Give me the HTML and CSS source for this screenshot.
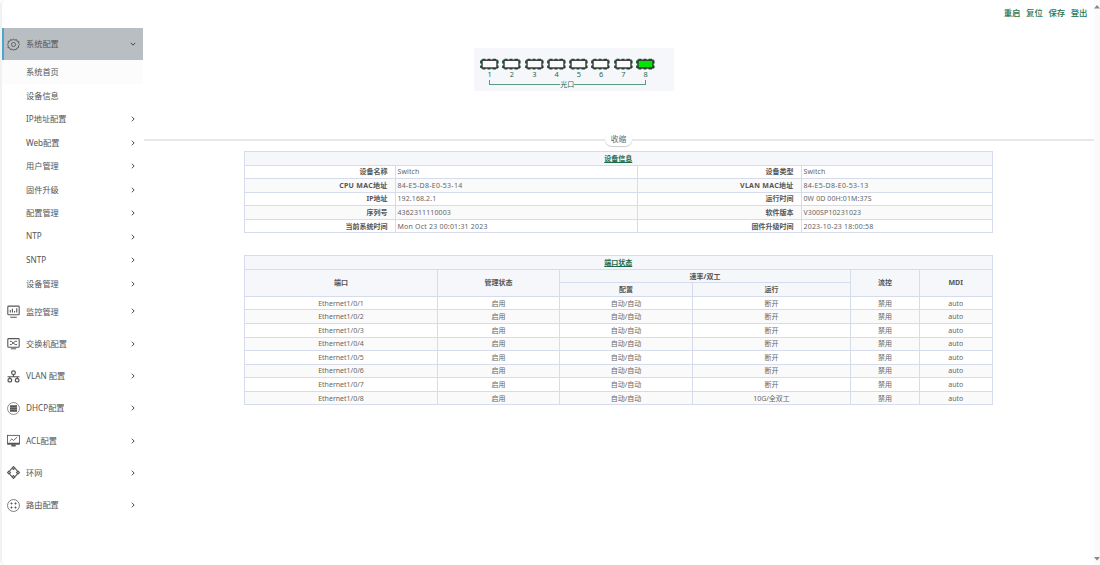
FILE: index.html
```html
<!DOCTYPE html>
<html lang="zh-CN">
<head>
    <meta charset="UTF-8">
    <meta name="viewport" content="width=device-width, initial-scale=1.0">
    <title>Switch</title>
    <link rel="stylesheet" href="styles.css">
</head>
<body>
    <!-- shared port socket shape -->
    <svg class="defs">
        <symbol id="socket" viewBox="0 0 19 12">
            <path class="pins" d="M2.500 1.700h3M7.500 1.700h3M12.500 1.700h3.500M2.500 10.600h3M7.500 10.600h3M12.500 10.600h3.500M1 2.500v3M1 7.500v2.500M17.700 2.500v3M17.700 7.500v2.500"/>
            <rect x="2" y="2.200" width="15" height="7.800" stroke="#333" stroke-width="1.400"/>
        </symbol>
    </svg>

    <div class="sidebar">
        <ul class="menu">
            <li class="group active">
                <svg class="icon" viewBox="0 0 24 24"><path d="M12 1.5l2.2 2.7 3.2-1.5 1 3.4 3.6.2-.6 3.5 1.9 2.2-2.5 2.5.8 3.4-3.5.7-1.4 3.3-3.3-1.2L12 22.8l-2.5-2.3-3.3 1-1-3.2-3.5-.8.8-3.4L.7 12l2-2.5-.6-3.4 3.5-.2 1-3.2 3.2 1.5z"/><circle cx="12" cy="12" r="3.8"/></svg>
                <span>系统配置</span>
                <svg class="arrow" viewBox="0 0 8 8"><path d="M1 2.5l3 3 3-3"/></svg>
            </li>
            <li class="sub current"><span>系统首页</span></li>
            <li class="sub"><span>设备信息</span></li>
            <li class="sub"><span>IP地址配置</span><svg class="arrow" viewBox="0 0 8 8"><path d="M2.5 1l3 3-3 3"/></svg></li>
            <li class="sub"><span>Web配置</span><svg class="arrow" viewBox="0 0 8 8"><path d="M2.5 1l3 3-3 3"/></svg></li>
            <li class="sub"><span>用户管理</span><svg class="arrow" viewBox="0 0 8 8"><path d="M2.5 1l3 3-3 3"/></svg></li>
            <li class="sub"><span>固件升级</span><svg class="arrow" viewBox="0 0 8 8"><path d="M2.5 1l3 3-3 3"/></svg></li>
            <li class="sub"><span>配置管理</span><svg class="arrow" viewBox="0 0 8 8"><path d="M2.5 1l3 3-3 3"/></svg></li>
            <li class="sub"><span>NTP</span><svg class="arrow" viewBox="0 0 8 8"><path d="M2.5 1l3 3-3 3"/></svg></li>
            <li class="sub"><span>SNTP</span><svg class="arrow" viewBox="0 0 8 8"><path d="M2.5 1l3 3-3 3"/></svg></li>
            <li class="sub"><span>设备管理</span><svg class="arrow" viewBox="0 0 8 8"><path d="M2.5 1l3 3-3 3"/></svg></li>
            <li class="group">
                <svg class="icon" viewBox="0 0 24 24"><rect x="1.5" y="2" width="21" height="16" rx="1.5" stroke-width="2"/><path stroke-width="2" d="M6 14V9M10 14V7M14 14v-3M18 14V6M6 22.5h12"/></svg>
                <span>监控管理</span>
                <svg class="arrow" viewBox="0 0 8 8"><path d="M2.5 1l3 3-3 3"/></svg>
            </li>
            <li class="group">
                <svg class="icon" viewBox="0 0 24 24"><rect x="1.5" y="3" width="21" height="16" rx="1.5" stroke-width="2"/><path stroke-width="1.8" d="M5.500 8h2.500l7 6h3.500M5.500 14h2.500l7-6h3.500M7 21.800h10"/></svg>
                <span>交换机配置</span>
                <svg class="arrow" viewBox="0 0 8 8"><path d="M2.5 1l3 3-3 3"/></svg>
            </li>
            <li class="group">
                <svg class="icon" viewBox="0 0 24 24"><circle cx="12" cy="5" r="3.500" stroke-width="2.200"/><path stroke-width="2.200" d="M12 8.500v4M1 12.500h22M5 12.500V16M19 12.500V16"/><rect x="2" y="16" width="6.500" height="6" rx="2" stroke-width="2.200"/><rect x="15.500" y="16" width="6.500" height="6" rx="2" stroke-width="2.200"/></svg>
                <span>VLAN 配置</span>
                <svg class="arrow" viewBox="0 0 8 8"><path d="M2.5 1l3 3-3 3"/></svg>
            </li>
            <li class="group">
                <svg class="icon" viewBox="0 0 24 24"><circle cx="12" cy="12" r="11" stroke-width="1.200"/><path stroke-width="3.700" d="M5.500 8h13M5.500 12h13M5.500 16h13"/></svg>
                <span>DHCP配置</span>
                <svg class="arrow" viewBox="0 0 8 8"><path d="M2.5 1l3 3-3 3"/></svg>
            </li>
            <li class="group">
                <svg class="icon" viewBox="0 0 24 24"><rect x="1" y="2.500" width="22" height="16"/><path d="M5 13l4-4 3 3 7-6.500"/><path stroke-width="3.500" d="M1 17.800h22M8 21.500h8"/></svg>
                <span>ACL配置</span>
                <svg class="arrow" viewBox="0 0 8 8"><path d="M2.5 1l3 3-3 3"/></svg>
            </li>
            <li class="group">
                <svg class="icon" viewBox="0 0 24 24" ><path stroke-width="2" d="M5 9.500a8 8 0 0 1 4.500-4.700M14.500 4.800A8 8 0 0 1 19 9.500M19 14.500a8 8 0 0 1-4.500 4.700M9.500 19.200A8 8 0 0 1 5 14.500"/><path stroke-width="2" d="M12 1l2.700 2.700L12 6.400 9.300 3.700zM20.300 9.300L23 12l-2.700 2.700-2.700-2.700zM12 17.600l2.700 2.700L12 23l-2.700-2.700zM3.700 9.300L6.400 12l-2.700 2.700L1 12z"/></svg>
                <span>环网</span>
                <svg class="arrow" viewBox="0 0 8 8"><path d="M2.5 1l3 3-3 3"/></svg>
            </li>
            <li class="group">
                <svg class="icon" viewBox="0 0 24 24"><circle cx="12" cy="12" r="11" stroke-width="1.400"/><path stroke-width="2.800" d="M7 7l2.500 2.500M17 7l-2.500 2.500M7 17l2.500-2.500M17 17l-2.500-2.500"/></svg>
                <span>路由配置</span>
                <svg class="arrow" viewBox="0 0 8 8"><path d="M2.5 1l3 3-3 3"/></svg>
            </li>
        </ul>
    </div>

    <div class="main">
        <div class="topbar">
            <a>重启</a><a>复位</a><a>保存</a><a>登出</a>
        </div>

        <div class="panel">
            <div class="ports">
                <div class="port"><svg><use href="#socket"/></svg>1</div>
                <div class="port"><svg><use href="#socket"/></svg>2</div>
                <div class="port"><svg><use href="#socket"/></svg>3</div>
                <div class="port"><svg><use href="#socket"/></svg>4</div>
                <div class="port"><svg><use href="#socket"/></svg>5</div>
                <div class="port"><svg><use href="#socket"/></svg>6</div>
                <div class="port"><svg><use href="#socket"/></svg>7</div>
                <div class="port up"><svg><use href="#socket"/></svg>8</div>
            </div>
            <div class="bracket"><span>光口</span></div>
        </div>

        <div class="divider"><span>收缩</span></div>

        <table class="info">
            <colgroup><col style="width:150.5px"><col style="width:242px"><col style="width:164px"><col></colgroup>
            <tr><th colspan="4" class="title">设备信息</th></tr>
            <tr><th>设备名称</th><td>Switch</td><th>设备类型</th><td>Switch</td></tr>
            <tr><th class="mac">CPU MAC地址</th><td class="mac">84-E5-D8-E0-53-14</td><th class="mac">VLAN MAC地址</th><td class="mac">84-E5-D8-E0-53-13</td></tr>
            <tr><th>IP地址</th><td>192.168.2.1</td><th>运行时间</th><td>0W 0D 00H:01M:37S</td></tr>
            <tr><th>序列号</th><td>4362311110003</td><th>软件版本</th><td>V300SP10231023</td></tr>
            <tr><th>当前系统时间</th><td class="date">Mon Oct 23 00:01:31 2023</td><th>固件升级时间</th><td class="date">2023-10-23 18:00:58</td></tr>
        </table>

        <table class="status">
            <colgroup><col style="width:193px"><col style="width:122px"><col style="width:133px"><col style="width:158px"><col style="width:69px"><col></colgroup>
            <thead>
                <tr><th colspan="6" class="title">端口状态</th></tr>
                <tr><th rowspan="2">端口</th><th rowspan="2">管理状态</th><th colspan="2">速率/双工</th><th rowspan="2">流控</th><th rowspan="2">MDI</th></tr>
                <tr><th>配置</th><th>运行</th></tr>
            </thead>
            <tbody>
                <tr><td>Ethernet1/0/1</td><td>启用</td><td>自动/自动</td><td>断开</td><td>禁用</td><td>auto</td></tr>
                <tr><td>Ethernet1/0/2</td><td>启用</td><td>自动/自动</td><td>断开</td><td>禁用</td><td>auto</td></tr>
                <tr><td>Ethernet1/0/3</td><td>启用</td><td>自动/自动</td><td>断开</td><td>禁用</td><td>auto</td></tr>
                <tr><td>Ethernet1/0/4</td><td>启用</td><td>自动/自动</td><td>断开</td><td>禁用</td><td>auto</td></tr>
                <tr><td>Ethernet1/0/5</td><td>启用</td><td>自动/自动</td><td>断开</td><td>禁用</td><td>auto</td></tr>
                <tr><td>Ethernet1/0/6</td><td>启用</td><td>自动/自动</td><td>断开</td><td>禁用</td><td>auto</td></tr>
                <tr><td>Ethernet1/0/7</td><td>启用</td><td>自动/自动</td><td>断开</td><td>禁用</td><td>auto</td></tr>
                <tr><td>Ethernet1/0/8</td><td>启用</td><td>自动/自动</td><td>10G/全双工</td><td>禁用</td><td>auto</td></tr>
            </tbody>
        </table>
    </div>

    <div class="scrollbar">
        <svg viewBox="0 0 6 4"><path d="M3 0l3 3.500H0z"/></svg>
        <svg viewBox="0 0 6 4"><path d="M0 0h6L3 3.500z"/></svg>
    </div>
</body>
</html>
```

FILE: styles.css
```css
* {
    margin: 0;
    padding: 0;
    box-sizing: border-box;
}

body {
    display: flex;
    height: 565px;
    overflow: hidden;
    background: #fff;
    color: #666;
    font-family: "Noto Sans", "Noto Sans CJK SC", sans-serif;
    font-size: 7px;
}

.defs {
    display: none;
}

/* Sidebar */
.sidebar {
    width: 144px;
    padding-top: 28px;
    border-left: 2px solid #f1f1f1;
    border-radius: 5px 0 0 5px;
}

.menu {
    list-style: none;
    width: 141px;
    font-size: 8.2px;
    color: #555;
}

.menu li {
    display: flex;
    align-items: center;
}

.menu span {
    flex: 1;
    padding-bottom: 1.8px;
}

.group {
    height: 32.3px;
    padding: 0 7.5px 0 5px;
}

.group.active {
    background: #b9bec2;
    border-left: 2px solid #4ba6cf;
    padding-left: 3px;
}

.group.active .arrow {
    margin-right: -0.5px;
}

.sub {
    height: 23.5px;
    padding: 0 7.5px 0 24px;
}

.sub.current {
    background: #fcfcfc;
}

.icon {
    width: 13px;
    height: 13px;
    margin-right: 6px;
    fill: none;
    stroke: #555;
    stroke-width: 1.6;
}

.arrow {
    width: 6px;
    height: 6px;
    fill: none;
    stroke: #444;
    stroke-width: 1.3;
}

/* Main area */
.main {
    flex: 1;
}

.topbar {
    display: flex;
    justify-content: flex-end;
    gap: 5.6px;
    height: 47.5px;
    padding: 6px 6.5px 0 0;
    font-size: 8.4px;
    font-weight: 500;
    line-height: 13px;
    color: #1f7350;
}

.panel {
    width: 199.5px;
    height: 43.5px;
    margin-left: 330px;
    padding: 10.5px 0 0 6px;
    background: #f5f7fb;
    color: #1d6b4d;
}

.ports {
    display: flex;
}

.port {
    width: 22.3px;
    height: 21.5px;
    padding-right: 3px;
    text-align: center;
    font-size: 7.4px;
    line-height: 8px;
}

.port svg {
    display: block;
    width: 19px;
    height: 12px;
    fill: #fafafa;
}

.port.up svg {
    fill: #00e600;
}

.pins {
    fill: none;
    stroke: #17553a;
    stroke-width: 1.8;
}

.bracket {
    width: 156.5px;
    height: 5px;
    margin-left: 9px;
    border: 1px solid #5b9a80;
    border-top: 0;
    text-align: center;
    line-height: 9px;
}

.bracket span {
    background: #f5f7fb;
}

.divider {
    height: 14px;
    margin: 41px 0 5px;
    text-align: center;
    background: linear-gradient(#e6e8e9, #e6e8e9) 0 7px / 100% 2px no-repeat;
}

.divider span {
    display: inline-block;
    width: 27px;
    height: 14px;
    margin-right: 1px;
    border-radius: 7px;
    background: #fff;
    box-shadow: 0 1px 1px #ccc;
    font-size: 7.8px;
    line-height: 14px;
}

/* Tables */
table {
    width: 748.5px;
    margin: 0 auto 22px 100px;
    border-collapse: collapse;
    table-layout: fixed;
    line-height: 10px;
}

tr {
    height: 13.55px;
}

th,
td {
    padding-top: 1px;
    border: 1px solid #d6dcec;
    color: #666;
}

th {
    color: #555;
}

.info tr:nth-child(odd) td,
.info tr:nth-child(odd) th,
.status tbody tr:nth-child(even) td {
    background: #fafafa;
}

.status th,
.info .title {
    background: #f5f7fb !important;
}

.title {
    color: #1d6b4d;
    text-decoration: underline;
}

.info th {
    text-align: right;
    padding-right: 7px;
}

.info .title {
    text-align: center;
    padding-right: 0;
}

.info td {
    padding-left: 2px;
    letter-spacing: 0.1px;
}

.info .mac {
    letter-spacing: 0.28px;
}

.info .date {
    letter-spacing: 0.2px;
}

.status td {
    text-align: center;
}

/* Scrollbar track */
.scrollbar {
    display: flex;
    flex-direction: column;
    justify-content: space-between;
    width: 6px;
    padding: 5px 0 4px;
    background: #fafafa;
}

.scrollbar svg {
    width: 6px;
    height: 4px;
    fill: #888;
}
```
